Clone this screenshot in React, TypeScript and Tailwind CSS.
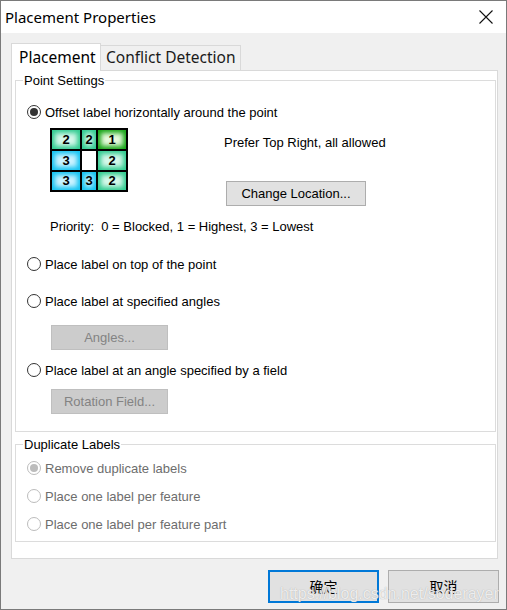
import React from "react";

const body = { fontFamily: '"Liberation Sans", Arial, sans-serif' };
const ui = { fontFamily: '"Noto Sans", "Noto Sans CJK SC", sans-serif' };

type CellKind = "two" | "one" | "three" | "empty";

const cells: { v: string; k: CellKind }[] = [
  { v: "2", k: "two" },
  { v: "2", k: "two" },
  { v: "1", k: "one" },
  { v: "3", k: "three" },
  { v: "", k: "empty" },
  { v: "2", k: "two" },
  { v: "3", k: "three" },
  { v: "3", k: "three" },
  { v: "2", k: "two" },
];

const cellClass: Record<CellKind, string> = {
  two: "bg-[#d6f8ea] shadow-[inset_0_0_5px_3px_#2fcb8f]",
  one: "bg-[#e6f9dc] shadow-[inset_0_0_5px_3px_#15a415]",
  three: "bg-[#ccf3ff] shadow-[inset_0_0_5px_3px_#12c3f2]",
  empty: "bg-white",
};

function Radio({ checked = false, disabled = false }: { checked?: boolean; disabled?: boolean }) {
  return (
    <span
      className={`w-[14px] h-[14px] shrink-0 rounded-full border bg-white flex items-center justify-center ${
        disabled ? "border-[#bcbcbc]" : "border-[#333333]"
      }`}
    >
      {checked && (
        <span className={`w-[8px] h-[8px] rounded-full ${disabled ? "bg-[#bcbcbc]" : "bg-[#333333]"}`} />
      )}
    </span>
  );
}

function RadioRow({
  label,
  checked,
  disabled,
  className = "",
}: {
  label: string;
  checked?: boolean;
  disabled?: boolean;
  className?: string;
}) {
  return (
    <div className={`flex items-center h-[16px] gap-[4px] pl-[11px] ${className}`}>
      <Radio checked={checked} disabled={disabled} />
      <span className={`text-[13px] leading-[16px] pt-[1px] whitespace-nowrap ${disabled ? "text-[#6d6d6d]" : "text-black"}`}>
        {label}
      </span>
    </div>
  );
}

function DisabledButton({ label, className = "" }: { label: string; className?: string }) {
  return (
    <div
      className={`ml-[35px] w-[117px] h-[25px] bg-[#cccccc] border border-[#bfbfbf] flex items-center justify-center text-[13px] text-[#838383] ${className}`}
    >
      {label}
    </div>
  );
}

export default function App() {
  return (
    <div className="relative w-[507px] h-[610px] flex flex-col border border-[#7a7a7a] bg-[#f0f0f0] overflow-hidden" style={body}>
      {/* Title bar */}
      <div className="h-[32px] bg-white flex items-center justify-between pl-[4px] pr-[13px] shrink-0">
        <span className="text-[15px] text-black" style={ui}>
          Placement Properties
        </span>
        <svg width="14" height="14" viewBox="0 0 14 14">
          <path d="M0.5 0.5 L13.5 13.5 M13.5 0.5 L0.5 13.5" stroke="#111" strokeWidth="1.1" fill="none" />
        </svg>
      </div>

      <div className="flex-1 pl-[10px] pr-[6px] pt-[10px]">
        {/* Tabs */}
        <div className="flex items-end h-[27px]" style={ui}>
          <div className="relative z-10 h-[28px] -mb-[1px] w-[90px] bg-white border border-b-0 border-[#d9d9d9] pl-[7px] flex items-center text-[15.5px] text-black">
            Placement
          </div>
          <div className="h-[25px] w-[140px] bg-[#f0f0f0] border border-l-0 border-b-0 border-[#d9d9d9] pl-[5px] flex items-center text-[15.5px] text-[#1a1a1a]">
            Conflict Detection
          </div>
        </div>

        {/* Tab panel */}
        <div className="w-[487px] h-[489px] bg-white border border-[#d9d9d9] pl-[3px] pt-[9px]">
          {/* Point Settings */}
          <div className="relative w-[481px] border border-[#dcdcdc] pb-[17px]">
            <span className="absolute left-[7px] -top-[8px] bg-white px-[1px] text-[13px] leading-[16px] text-black">
              Point Settings
            </span>

            <RadioRow label="Offset label horizontally around the point" checked className="mt-[23px]" />

            <div className="flex mt-[8px] pl-[34px]">
              <div className="grid grid-cols-[28px_14px_28px] grid-rows-[19px_19px_18px] gap-[2px] p-[2px] bg-black h-fit">
                {cells.map((c, i) => (
                  <div
                    key={i}
                    className={`flex items-center justify-center text-[13px] font-bold text-black ${cellClass[c.k]}`}
                  >
                    {c.v}
                  </div>
                ))}
              </div>
              <div className="ml-[96px] flex flex-col">
                <span className="mt-[7px] h-[16px] leading-[16px] text-[13px] text-black whitespace-nowrap">
                  Prefer Top Right, all allowed
                </span>
                <div className="mt-[30px] ml-[2px] w-[140px] h-[25px] bg-[#e1e1e1] border border-[#adadad] flex items-center justify-center text-[13px] text-black">
                  Change Location...
                </div>
              </div>
            </div>

            <div className="mt-[12px] pl-[34px] h-[16px] leading-[16px] pt-[1px] text-[13px] text-black whitespace-pre">
              {"Priority:  0 = Blocked, 1 = Highest, 3 = Lowest"}
            </div>

            <RadioRow label="Place label on top of the point" className="mt-[22px]" />
            <RadioRow label="Place label at specified angles" className="mt-[21px]" />
            <DisabledButton label="Angles..." className="mt-[16px]" />
            <RadioRow label="Place label at an angle specified by a field" className="mt-[12px]" />
            <DisabledButton label="Rotation Field..." className="mt-[11px]" />
          </div>

          {/* Duplicate Labels */}
          <div className="relative mt-[12px] w-[481px] border border-[#dcdcdc] pt-[15px] pb-[9px] flex flex-col gap-[12px]">
            <span className="absolute left-[7px] -top-[8px] bg-white px-[1px] text-[13px] leading-[16px] text-black">
              Duplicate Labels
            </span>
            <RadioRow label="Remove duplicate labels" checked disabled />
            <RadioRow label="Place one label per feature" disabled />
            <RadioRow label="Place one label per feature part" disabled />
          </div>
        </div>

        {/* Dialog buttons */}
        <div className="flex gap-[9px] pl-[257px] mt-[11px]" style={ui}>
          <div className="shrink-0 w-[111px] h-[33px] bg-[#e1e1e1] border-2 border-[#0078d7] flex items-center justify-center text-[14px] text-black">
            确定
          </div>
          <div className="shrink-0 w-[111px] h-[33px] bg-[#e1e1e1] border border-[#adadad] flex items-center justify-center text-[14px] text-black">
            取消
          </div>
        </div>
      </div>

      {/* Watermark */}
      <span className="absolute left-[279px] top-[581px] text-[16px] text-white/80 whitespace-nowrap pointer-events-none [text-shadow:0_0_1px_#9a9a9a]">
        https://blog.csdn.net/soderayer
      </span>
    </div>
  );
}
